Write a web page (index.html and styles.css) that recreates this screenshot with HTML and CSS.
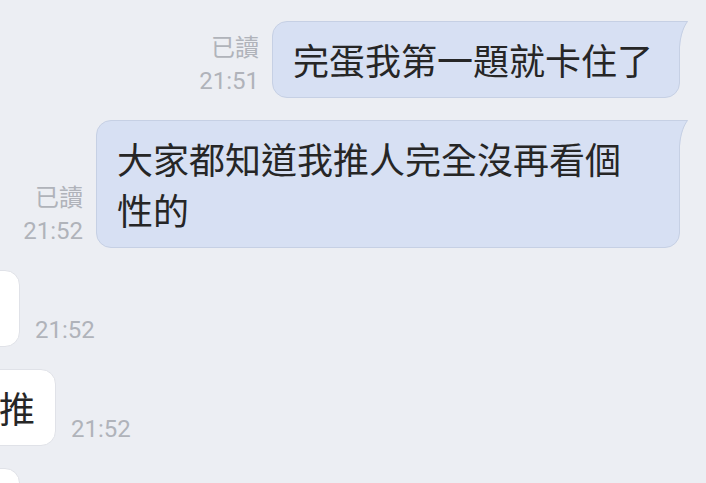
FILE: index.html
```html
<!DOCTYPE html>
<html lang="zh-Hant">

<head>
    <meta charset="UTF-8">
    <meta name="viewport" content="width=device-width, initial-scale=1.0">
    <title>聊天</title>
    <link rel="stylesheet" href="styles.css">
</head>

<body>
    <div class="chat">
        <!-- outgoing -->
        <div class="row out first">
            <div class="meta">
                <div>已讀</div>
                <div class="time">21:51</div>
            </div>
            <div class="bubble mine">
                完蛋我第一題就卡住了
                <svg class="tail" width="12" height="26" viewBox="0 0 12 26">
                    <path d="M0 0 H11 C8 4 4 12 3 26 H0 Z" fill="#d7e0f3" />
                    <path d="M0 0.5 H10.5 C7.5 4.5 3.5 12 2.5 26" fill="none" stroke="#c6d0e4" stroke-width="1" />
                </svg>
            </div>
        </div>

        <div class="row out">
            <div class="meta">
                <div>已讀</div>
                <div class="time">21:52</div>
            </div>
            <div class="bubble mine wide">
                大家都知道我推人完全沒再看個性的
                <svg class="tail" width="12" height="26" viewBox="0 0 12 26">
                    <path d="M0 0 H11 C8 4 4 12 3 26 H0 Z" fill="#d7e0f3" />
                    <path d="M0 0.5 H10.5 C7.5 4.5 3.5 12 2.5 26" fill="none" stroke="#c6d0e4" stroke-width="1" />
                </svg>
            </div>
        </div>

        <!-- incoming, cut off at the left edge -->
        <div class="row in">
            <div class="slot s20">
                <div class="bubble theirs">我也是</div>
            </div>
            <div class="meta">
                <div class="time">21:52</div>
            </div>
        </div>

        <div class="row in">
            <div class="slot s56">
                <div class="bubble theirs">我都亂推</div>
            </div>
            <div class="meta">
                <div class="time">21:52</div>
            </div>
        </div>

        <div class="row in">
            <div class="slot s20">
                <div class="bubble theirs">哈哈</div>
            </div>
        </div>
    </div>
</body>

</html>
```

FILE: styles.css
```css
html,
body {
    margin: 0;
    height: 100%;
    overflow: hidden;
}

body {
    background-color: #eceef3;
    font-family: "Noto Sans CJK TC", "Noto Sans CJK SC", sans-serif;
    color: #262626;
}

.chat {
    display: flex;
    flex-direction: column;
    gap: 22px;
    padding-top: 21px;
}

.row {
    display: flex;
    align-items: flex-end;
}

.row.out {
    justify-content: flex-end;
    gap: 13px;
    padding-right: 26px;
}

.row.in {
    gap: 15px;
}

.meta {
    font-family: Roboto, "Noto Sans CJK TC", sans-serif;
    font-size: 24px;
    line-height: 33px;
    color: #b0b3ba;
    text-align: right;
    margin-bottom: 0;
}

.bubble {
    position: relative;
    box-sizing: border-box;
    font-size: 36px;
    line-height: 51px;
    padding: 12px 26px 12px 20px;
    border-radius: 15px;
}

.bubble.mine {
    background-color: #d7e0f3;
    border: 1px solid #c6d0e4;
    border-top-right-radius: 0;
    max-width: 584px;
}

.bubble.theirs {
    background-color: #ffffff;
    border: 1px solid #e0e2e8;
    padding: 12px 20px;
    white-space: nowrap;
    flex-shrink: 0;
}

.tail {
    position: absolute;
    top: -1px;
    right: -10px;
}

/* the left edge of the screen crops incoming bubbles */
.slot {
    display: flex;
    justify-content: flex-end;
    flex-shrink: 0;
}

.s20 {
    width: 20px;
}

.s56 {
    width: 56px;
}
```
